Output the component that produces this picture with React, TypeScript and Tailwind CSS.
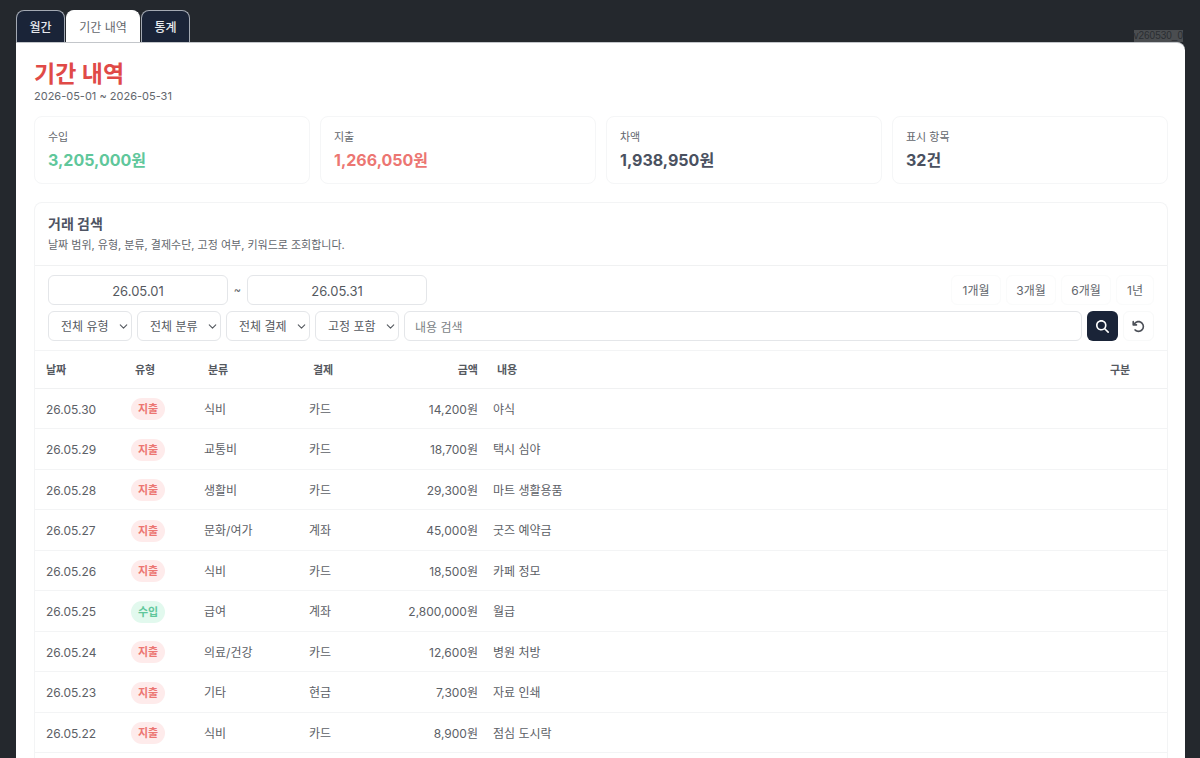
import { ChevronDown } from "lucide-react";
import { FaArrowRotateLeft, FaMagnifyingGlass } from "react-icons/fa6";
import clsx from "clsx";

type Kind = "수입" | "지출";

interface Entry {
  date: string;
  kind: Kind;
  category: string;
  payment: string;
  amount: number;
  memo: string;
}

const tabs = [
  { label: "월간", width: "w-[49px]" },
  { label: "기간 내역", width: "w-[74px]" },
  { label: "통계", width: "w-[49px]" },
];

const summary = [
  { label: "수입", value: "3,205,000원", color: "text-[#5fc79b]" },
  { label: "지출", value: "1,266,050원", color: "text-[#ec7672]" },
  { label: "차액", value: "1,938,950원", color: "text-[#4a5160]" },
  { label: "표시 항목", value: "32건", color: "text-[#4a5160]" },
];

const filters = [
  { name: "유형", label: "전체 유형" },
  { name: "분류", label: "전체 분류" },
  { name: "결제", label: "전체 결제" },
  { name: "고정 여부", label: "고정 포함" },
];

const presets = [
  { label: "1개월", width: "w-[50px]" },
  { label: "3개월", width: "w-[50px]" },
  { label: "6개월", width: "w-[50px]" },
  { label: "1년", width: "w-[38px]" },
];

const entries: Entry[] = [
  { date: "26.05.30", kind: "지출", category: "식비", payment: "카드", amount: 14200, memo: "야식" },
  { date: "26.05.29", kind: "지출", category: "교통비", payment: "카드", amount: 18700, memo: "택시 심야" },
  { date: "26.05.28", kind: "지출", category: "생활비", payment: "카드", amount: 29300, memo: "마트 생활용품" },
  { date: "26.05.27", kind: "지출", category: "문화/여가", payment: "계좌", amount: 45000, memo: "굿즈 예약금" },
  { date: "26.05.26", kind: "지출", category: "식비", payment: "카드", amount: 18500, memo: "카페 정모" },
  { date: "26.05.25", kind: "수입", category: "급여", payment: "계좌", amount: 2800000, memo: "월급" },
  { date: "26.05.24", kind: "지출", category: "의료/건강", payment: "카드", amount: 12600, memo: "병원 처방" },
  { date: "26.05.23", kind: "지출", category: "기타", payment: "현금", amount: 7300, memo: "자료 인쇄" },
  { date: "26.05.22", kind: "지출", category: "식비", payment: "카드", amount: 8900, memo: "점심 도시락" },
];

function Tabs() {
  return (
    <nav className="flex items-end gap-px">
      {tabs.map((tab) => (
        <button
          key={tab.label}
          type="button"
          className={clsx(
            "h-8 rounded-t-lg border border-b-0 pt-0.5 text-[12px] whitespace-nowrap",
            tab.width,
            tab.label === "기간 내역"
              ? "border-white bg-white text-[#63676d]"
              : "border-[#a3a9b3] bg-[#1a2438] font-medium text-[#e8eaee]"
          )}
        >
          {tab.label}
        </button>
      ))}
    </nav>
  );
}

function Filters() {
  const field = "h-[30px] rounded-md border border-[#e4e6e9] bg-white pt-0.5 text-[#55595f]";

  return (
    <div className="flex flex-col gap-1.5 border-b border-[#f3f4f5] px-[13px] py-[9px]">
      <div className="flex items-center justify-between">
        <div className="flex items-center text-[13px]">
          <input aria-label="시작일" defaultValue="26.05.01" className={clsx(field, "w-[180px] text-center")} />
          <span className="w-[19px] text-center text-[11px] text-[#63676d]">~</span>
          <input aria-label="종료일" defaultValue="26.05.31" className={clsx(field, "w-[180px] text-center")} />
        </div>
        <div className="flex gap-[5px]">
          {presets.map((p) => (
            <button
              key={p.label}
              type="button"
              className={clsx("h-[30px] rounded-md border border-[#fafbfb] pt-0.5 text-[12px] text-[#63676d]", p.width)}
            >
              {p.label}
            </button>
          ))}
        </div>
      </div>

      <div className="flex gap-[5px]">
        {filters.map((f) => (
          <div key={f.name} className="relative">
            <select aria-label={f.name} className={clsx(field, "w-[84px] appearance-none pl-3 text-[12px]")}>
              <option>{f.label}</option>
            </select>
            <ChevronDown
              className="pointer-events-none absolute top-[9px] right-[2px] size-[13px] text-[#55595f]"
              strokeWidth={2}
            />
          </div>
        ))}
        <input
          aria-label="내용 검색"
          placeholder="내용 검색"
          className={clsx(field, "min-w-0 flex-1 px-2.5 text-[12px] placeholder:text-[#7b7f85]")}
        />
        <button
          type="button"
          aria-label="검색"
          className="flex h-[30px] w-[31px] items-center justify-center rounded-md bg-[#1a2438] text-white"
        >
          <FaMagnifyingGlass className="size-[13px]" />
        </button>
        <button
          type="button"
          aria-label="초기화"
          className="flex h-[30px] w-[31px] items-center justify-center rounded-md border border-[#f8f9f9] text-[#4b4f57]"
        >
          <FaArrowRotateLeft className="size-[13px]" />
        </button>
      </div>
    </div>
  );
}

function EntryTable() {
  return (
    <table className="w-full table-fixed text-[12px] leading-relaxed text-[#5c6066]">
      <colgroup>
        <col className="w-[88px]" />
        <col className="w-[73px]" />
        <col className="w-[105px]" />
        <col className="w-[97px]" />
        <col className="w-[87px]" />
        <col />
        <col className="w-[69px]" />
      </colgroup>
      <thead>
        <tr className="h-[37px] border-b border-[#f0f1f2] text-left text-[11px] text-[#55595f] *:pt-1">
          <th className="pl-[11px]">날짜</th>
          <th className="pl-3">유형</th>
          <th className="pl-3">분류</th>
          <th className="pl-3">결제</th>
          <th className="pr-[7px] text-right">금액</th>
          <th className="pl-3">내용</th>
          <th className="pl-3">구분</th>
        </tr>
      </thead>
      <tbody>
        {entries.map((e) => (
          <tr key={e.date} className="border-b border-[#f3f4f5]">
            <td className="pt-[11px] pb-[9px] pl-[11px]">{e.date}</td>
            <td className="pt-0.5 pl-2">
              <span
                className={clsx(
                  "block w-[34px] rounded-full text-center text-[11px] leading-[22px] font-bold",
                  e.kind === "수입" ? "bg-[#e2f9ee] text-[#5fc79b]" : "bg-[#feebeb] text-[#ec7672]"
                )}
              >
                {e.kind}
              </span>
            </td>
            <td className="pt-0.5 pl-2">{e.category}</td>
            <td className="pt-0.5 pl-2">{e.payment}</td>
            <td className="pt-0.5 pr-[7px] text-right whitespace-nowrap">{e.amount.toLocaleString("en-US")}원</td>
            <td className="pt-0.5 pl-2">{e.memo}</td>
            <td />
          </tr>
        ))}
      </tbody>
    </table>
  );
}

export default function App() {
  return (
    <div className="flex min-h-screen flex-col bg-[#24282d] pt-2.5 pr-[15px] pl-4 font-['Inter','Noto_Sans_CJK_KR',sans-serif]">
      <header className="flex items-end justify-between pr-0.5">
        <Tabs />
        <span className="h-3 bg-[#4a4d50] font-['Liberation_Sans',sans-serif] text-[10px] leading-3 text-[#2b2e32]">
          v260530_0
        </span>
      </header>

      <main className="flex flex-1 flex-col rounded-tr-lg border-t border-[#c3c6ca] bg-white pt-[17px] pr-[17px] pl-[18px]">
        <h1 className="text-[23px] leading-7 font-bold text-[#e04a47]">기간 내역</h1>
        <p className="text-[11px] leading-4 text-[#63676d]">2026-05-01 ~ 2026-05-31</p>

        <section className="mt-3 grid grid-cols-4 gap-2.5">
          {summary.map((s) => (
            <div key={s.label} className="rounded-lg border border-[#f5f6f7] px-[13px] py-3">
              <p className="text-[11px] leading-4 text-[#63676d]">{s.label}</p>
              <p className={clsx("mt-1 text-[16px] leading-[22px] font-bold", s.color)}>{s.value}</p>
            </div>
          ))}
        </section>

        <section className="mt-[18px] flex-1 rounded-t-lg border border-b-0 border-[#f3f4f5]">
          <div className="border-b border-[#f0f1f2] px-[13px] pt-[11px] pb-3">
            <h2 className="text-[14px] leading-5 font-bold text-[#4f5463]">거래 검색</h2>
            <p className="mt-[3px] text-[11px] leading-4 text-[#63676d]">
              날짜 범위, 유형, 분류, 결제수단, 고정 여부, 키워드로 조회합니다.
            </p>
          </div>
          <Filters />
          <EntryTable />
        </section>
      </main>
    </div>
  );
}
